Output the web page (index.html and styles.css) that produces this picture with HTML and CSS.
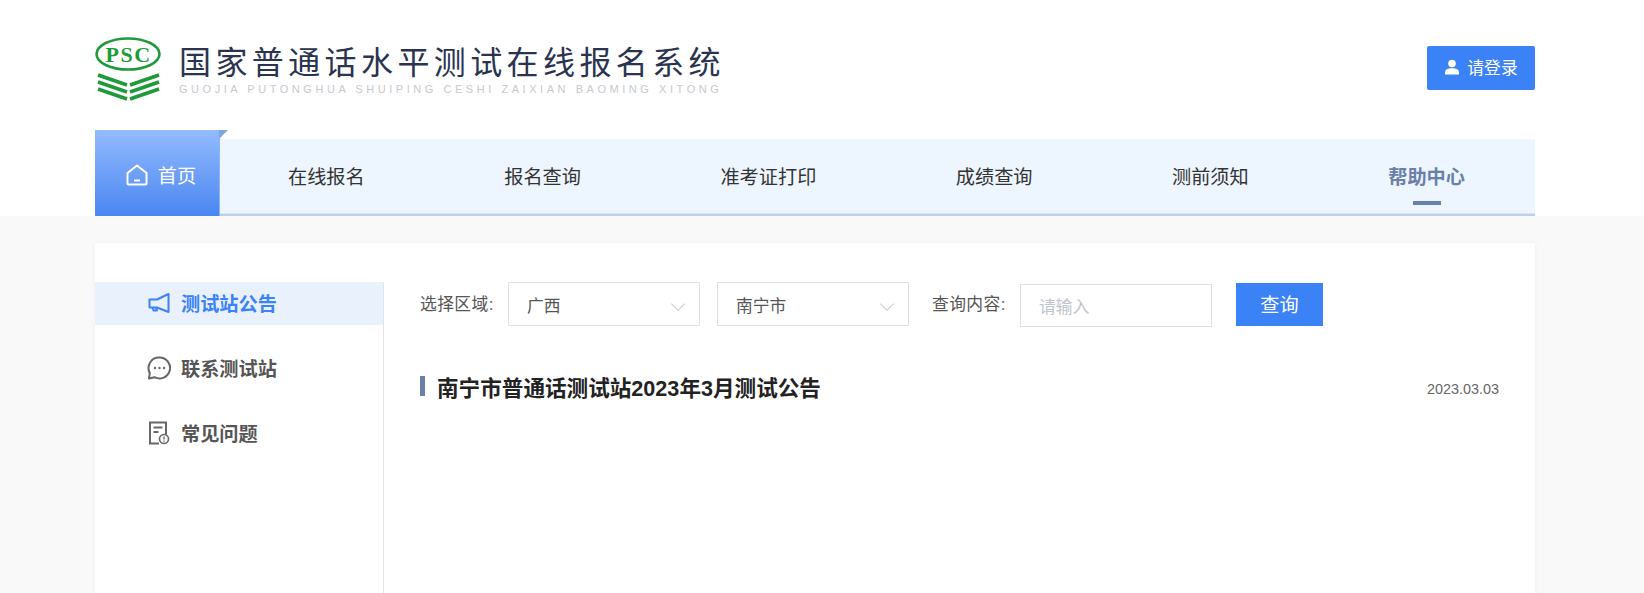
FILE: index.html
```html
<!DOCTYPE html>
<html lang="zh-CN">
<head>
<meta charset="utf-8">
<title>国家普通话水平测试在线报名系统</title>
<link rel="stylesheet" href="styles.css">
</head>
<body>
<header class="top">
  <div class="wrap">
    <div class="brand-row">
      <div class="brand">
        <svg class="logo" viewBox="0 0 66 64" width="66" height="64">
          <ellipse cx="33" cy="17" rx="31.500" ry="15.500" fill="none" stroke="#1f9a3a" stroke-width="2.600"/>
          <text x="33.500" y="24.500" text-anchor="middle" class="logo-text">PSC</text>
          <g fill="none" stroke="#1f9a3a" stroke-width="3.600">
            <path d="M3 38l29 10M3 45l29 10M3 52l29 10"/>
            <path d="M64 38l-29 10M64 45l-29 10M64 52l-29 10"/>
          </g>
        </svg>
        <div class="brand-text">
          <div class="brand-cn">国家普通话水平测试在线报名系统</div>
          <div class="brand-en">GUOJIA PUTONGHUA SHUIPING CESHI ZAIXIAN BAOMING XITONG</div>
        </div>
      </div>
      <a class="login" href="#">
        <svg class="login-icon" viewBox="0 0 16 16" width="16" height="16">
          <circle cx="8" cy="4.500" r="3.800" fill="#fff"/>
          <path d="M1 15.500v-2C1 10.600 4 9.300 8 9.300s7 1.300 7 4.200v2z" fill="#fff"/>
        </svg>
        <span>请登录</span>
      </a>
    </div>
    <nav class="nav">
      <a class="home" href="#">
        <svg viewBox="0 0 22 22" width="22" height="22" fill="none" stroke="#fff" stroke-width="2">
          <path d="M1.500 9L11 1.500 20.500 9v10.500a1 1 0 0 1-1 1h-17a1 1 0 0 1-1-1z" stroke-linejoin="round"/>
          <path d="M8 16.500h6"/>
        </svg>
        <span>首页</span>
      </a>
      <ul class="nav-list">
        <li><a href="#">在线报名</a></li>
        <li><a href="#">报名查询</a></li>
        <li><a href="#">准考证打印</a></li>
        <li><a href="#">成绩查询</a></li>
        <li><a href="#">测前须知</a></li>
        <li class="current"><a href="#">帮助中心</a></li>
      </ul>
    </nav>
  </div>
</header>
<main class="page">
  <div class="wrap card">
    <aside class="side">
      <a class="side-item active" href="#">
        <svg viewBox="0 0 22 22" width="22" height="22" fill="none" stroke="#3b82f6" stroke-width="2" stroke-linejoin="round">
          <path d="M20.500 2v18L9 15.500H1.500v-8H9z"/>
          <path d="M4.500 15.500l1 3h3.500l-1-3"/>
        </svg>
        <span>测试站公告</span>
      </a>
      <a class="side-item" href="#">
        <svg viewBox="0 0 24 24" width="24" height="24" fill="none" stroke="#666" stroke-width="2">
          <path d="M12.500 1.500a10.500 10.500 0 1 1-5 19.700L2 22.500l.8-5.500A10.500 10.500 0 0 1 12.500 1.500z" stroke-linejoin="round"/>
          <g fill="#666" stroke="none"><circle cx="8" cy="12" r="1.200"/><circle cx="12.500" cy="12" r="1.200"/><circle cx="17" cy="12" r="1.200"/></g>
        </svg>
        <span>联系测试站</span>
      </a>
      <a class="side-item" href="#">
        <svg viewBox="0 0 22 24" width="22" height="24" fill="none" stroke="#666" stroke-width="2">
          <path d="M11 22.500H2V1.500h16v12"/>
          <path d="M5.500 6.500h9M5.500 11h5"/>
          <circle cx="16" cy="18" r="4.500" stroke-width="1.600"/>
          <path d="M16 15.500v3M16 19.500v1.200" stroke-width="1.300"/>
        </svg>
        <span>常见问题</span>
      </a>
    </aside>
    <section class="content">
      <form class="filter">
        <label class="filter-label">选择区域:</label>
        <div class="select"><span>广西</span><i class="chev"></i></div>
        <div class="select"><span>南宁市</span><i class="chev"></i></div>
        <label class="filter-label query-label">查询内容:</label>
        <div class="input">请输入</div>
        <button class="search" type="button">查询</button>
      </form>
      <article class="notice">
        <h3 class="notice-title">南宁市普通话测试站2023年3月测试公告</h3>
        <time class="notice-date">2023.03.03</time>
      </article>
    </section>
  </div>
</main>
</body>
</html>
```
FILE: styles.css
```css
* { box-sizing: border-box; }
html, body { margin: 0; padding: 0; height: 100%; overflow: hidden; }
body {
  background: #f9f9f9;
  color: #333;
  font-family: "Liberation Sans", "Noto Sans CJK SC", sans-serif;
}
a { color: inherit; text-decoration: none; }
ul { list-style: none; margin: 0; padding: 0; }
.wrap { width: 1440px; margin: 0 auto; }
.top, .page { padding-right: 14px; }
.top { background: #fff; height: 216px; }
.brand-row {
  height: 130px;
  display: flex;
  justify-content: space-between;
  padding-top: 37px;
  align-items: flex-start;
}
.brand { display: flex; align-items: flex-start; gap: 18px; }
.logo { display: block; }
.logo-text {
  font-family: "Liberation Serif", serif;
  font-weight: 700;
  font-size: 22px;
  fill: #1f9a3a;
  letter-spacing: 1.500px;
}
.brand-text { width: 545px; padding-top: 7px; }
.brand-cn {
  font-size: 32px;
  line-height: 38px;
  letter-spacing: 4.400px;
  color: #2a3450;
  white-space: nowrap;
}
.brand-en {
  font-size: 11px;
  line-height: 12px;
  margin-top: 1px;
  letter-spacing: 3.550px;
  color: #c6c9ce;
  white-space: nowrap;
}
.login {
  margin-top: 9px;
  width: 108px;
  height: 44px;
  padding-bottom: 2px;
  background: #3b82f6;
  border-radius: 2px;
  color: #fff;
  font-size: 16.800px;
  display: flex;
  align-items: center;
  justify-content: center;
  gap: 7px;
}
.nav { display: flex; align-items: flex-end; height: 86px; }
.home {
  position: relative;
  width: 125px;
  height: 86px;
  background: linear-gradient(#93bbff, #4a86f0);
  border-right: 1px solid #8db4f5;
  color: #fff;
  font-size: 19.200px;
  display: flex;
  align-items: center;
  justify-content: center;
  gap: 10px;
  padding: 4px 0 0 8px;
}
.home::after {
  content: "";
  position: absolute;
  left: 100%;
  top: 0;
  border-style: solid;
  border-width: 0 0 9px 9px;
  border-color: transparent transparent transparent #7fa6e6;
}
.nav-list {
  flex: 1;
  height: 77px;
  padding: 0 70px 4px 68px;
  background: #edf5fe;
  box-shadow: inset 0 -2px 0 #bccfe4, inset 0 -3px 0 #dbe6f2;
  display: flex;
  justify-content: space-between;
  align-items: center;
  font-size: 19.200px;
  color: #333;
}
.current {
  position: relative;
  font-weight: 700;
  color: #6b80a8;
}
.current::after {
  content: "";
  position: absolute;
  left: 50%;
  margin-left: -14px;
  bottom: -15px;
  width: 28px;
  height: 4px;
  background: #6b80a8;
}
.page { padding-top: 27px; }
.card {
  background: #fff;
  display: flex;
  height: 600px;
  padding-top: 39px;
  box-shadow: 0 0 6px rgba(0, 0, 0, .04);
}
.side {
  width: 289px;
  border-right: 1px solid #e4e4e4;
  display: flex;
  flex-direction: column;
  gap: 22px;
}
.side-item {
  height: 43px;
  display: flex;
  align-items: center;
  padding: 0 0 2px 52px;
  gap: 10px;
  font-size: 19.200px;
  font-weight: 700;
  color: #555;
}
.side-item svg { flex: none; width: 24px; }
.side-item.active { background: #e9f1fc; color: #3b82f6; }
.content { flex: 1; padding: 0 36px; }
.filter { display: flex; align-items: flex-start; height: 45px; }
.filter-label {
  flex: none;
  width: 88px;
  height: 44px;
  line-height: 46px;
  font-size: 16.800px;
  letter-spacing: .4px;
  color: #555;
  white-space: nowrap;
}
.select, .input {
  width: 192px;
  border: 1px solid #dcdfe6;
  display: flex;
  align-items: center;
  font-size: 16.800px;
  color: #555;
}
.select {
  height: 44px;
  padding: 1px 18px 0;
  justify-content: space-between;
  margin-right: 17px;
}
.chev {
  width: 10px;
  height: 10px;
  border-right: 1.500px solid #c9ccd3;
  border-bottom: 1.500px solid #c9ccd3;
  transform: rotate(45deg);
  margin: -2px -2px 0 0;
}
.query-label { margin-left: 6px; }
.input { height: 43px; padding: 0 18px; color: #c0c4cc; margin-top: 2px; }
.search {
  margin: 1px 0 0 24px;
  width: 87px;
  height: 43px;
  padding: 0 0 2px;
  background: #3b82f6;
  border: 0;
  color: #fff;
  font: inherit;
  font-size: 19.200px;
}
.notice {
  display: flex;
  justify-content: space-between;
  align-items: center;
  margin-top: 49px;
  height: 26px;
}
.notice-title {
  display: flex;
  align-items: flex-start;
  margin: 0;
  font-size: 21.600px;
  line-height: 26px;
  font-weight: 700;
  color: #222;
}
.notice-title::before {
  content: "";
  width: 5px;
  height: 20px;
  margin-right: 12px;
  background: #6b80a8;
}
.notice-date { font-size: 14.400px; color: #666; }
```
